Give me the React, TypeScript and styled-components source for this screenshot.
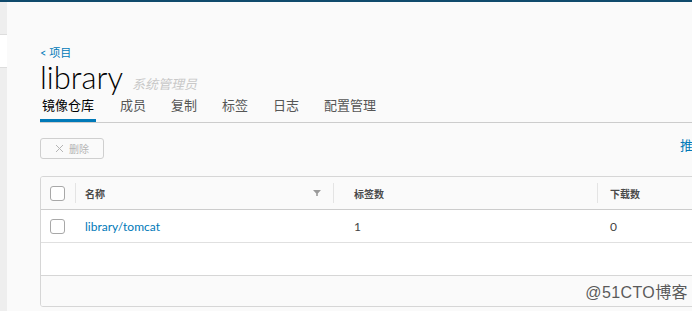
import React from 'react'
import styled, { createGlobalStyle } from 'styled-components'

const GlobalStyle = createGlobalStyle`
  html, body {
    margin: 0;
    padding: 0;
    background: #fafafa;
    overflow: hidden;
  }
  body {
    font-family: Lato, "Noto Sans CJK SC", sans-serif;
    color: #313131;
  }
`

const CJK = `Lato, "Noto Sans CJK SC", sans-serif`

const TopBar = styled.div`
  height: 2px;
  background: #0f4a6c;
`

const Shell = styled.div`
  display: flex;
  height: 309px;
`

const Sidebar = styled.div`
  width: 7px;
  flex: none;
  background: #eeeeee;
  padding-top: 32px;
`

const SideActive = styled.div`
  height: 32px;
  background: #ffffff;
  border-top: 1px solid #dddddd;
  border-bottom: 1px solid #dddddd;
`

const Main = styled.main`
  flex: 1;
  min-width: 0;
  padding: 44px 0 0 33px;
  overflow: hidden;
`

const Breadcrumb = styled.a`
  display: block;
  font-family: ${CJK};
  font-size: 11px;
  line-height: 14px;
  color: #0079b8;
  text-decoration: none;
`

const TitleRow = styled.div`
  display: flex;
  align-items: baseline;
  gap: 9px;
  height: 34px;
`

const Title = styled.h1`
  margin: 0;
  font-family: Lato, sans-serif;
  font-weight: 300;
  font-size: 31px;
  line-height: 34px;
  color: #000000;
`

const Role = styled.span`
  font-family: ${CJK};
  font-style: italic;
  font-size: 13px;
  color: #c8c8c8;
`

const TabBar = styled.nav`
  display: flex;
  gap: 23px;
  border-bottom: 1px solid #cccccc;
`

const Tab = styled.div<{ $active?: boolean }>`
  font-family: ${CJK};
  font-size: 13px;
  line-height: 18px;
  padding: 2px ${({ $active }) => ($active ? '2px' : '1px')} 8px;
  color: ${({ $active }) => ($active ? '#000000' : '#565656')};
  box-shadow: ${({ $active }) => ($active ? 'inset 0 -3px 0 #0079b8' : 'none')};
`

const Toolbar = styled.div`
  display: flex;
  align-items: flex-start;
  justify-content: space-between;
  margin-top: 15px;
  height: 22px;
`

const GhostButton = styled.button`
  display: flex;
  align-items: center;
  gap: 5px;
  height: 21px;
  width: 64px;
  padding: 0 0 0 14px;
  border: 1px solid #cfcfcf;
  border-radius: 3px;
  background: transparent;
  font-family: ${CJK};
  font-size: 10px;
  color: #b5b5b5;
`

const PushLink = styled.span`
  font-family: ${CJK};
  font-size: 13px;
  line-height: 14px;
  white-space: nowrap;
  color: #0079b8;
  margin-right: -40px;
`

const Table = styled.div`
  margin-top: 16px;
  width: 700px;
  border: 1px solid #d6d6d6;
  border-radius: 3px;
  background: #ffffff;
  overflow: hidden;
`

const columns = '34px 258px 264px 1fr'

const HeaderRow = styled.div`
  display: grid;
  grid-template-columns: ${columns};
  height: 32px;
  align-items: center;
  background: #fafafa;
  border-bottom: 1px solid #cccccc;
`

const Row = styled.div`
  display: grid;
  grid-template-columns: ${columns};
  height: 32px;
  align-items: center;
  border-bottom: 1px solid #e0e0e0;
`

const HeadCell = styled.div<{ $pad: number }>`
  display: flex;
  align-items: center;
  justify-content: space-between;
  height: 20px;
  padding: 0 12px 0 ${({ $pad }) => $pad}px;
  border-left: 1px solid #e4e4e4;
  font-family: ${CJK};
  font-size: 10px;
  font-weight: 600;
  color: #4a4a4a;
`

const CheckCell = styled.div`
  display: flex;
  align-items: center;
  padding-left: 9px;
`

const Box = styled.span`
  display: block;
  width: 13px;
  height: 13px;
  border: 1px solid #a8a8a8;
  border-radius: 3px;
  background: #ffffff;
`

const Cell = styled.div<{ $pad: number }>`
  padding-left: ${({ $pad }) => $pad + 1}px;
  font-family: ${CJK};
  font-size: 12px;
  color: #444444;
`

const RepoLink = styled.a`
  color: #0079b8;
  text-decoration: none;
`

const EmptyArea = styled.div`
  height: 32px;
  border-bottom: 1px solid #d6d6d6;
`

const Footer = styled.div`
  height: 30px;
  background: #fafafa;
`

const Watermark = styled.div`
  position: absolute;
  right: 4px;
  bottom: 8px;
  font-family: "Liberation Sans", "Noto Sans CJK SC", sans-serif;
  font-size: 16px;
  letter-spacing: 0.4px;
  color: #5a5a5a;
`

function FilterIcon() {
  return (
    <svg width="8" height="6" viewBox="0 0 8 6">
      <path d="M0 0h8L4.8 3.4V6H3.2V3.4z" fill="#9a9a9a" />
    </svg>
  )
}

function CloseIcon() {
  return (
    <svg width="9" height="9" viewBox="0 0 9 9">
      <path d="M1 1l7 7M8 1L1 8" stroke="#b5b5b5" strokeWidth="1" fill="none" />
    </svg>
  )
}

const tabs = ['镜像仓库', '成员', '复制', '标签', '日志', '配置管理']

export default function App() {
  return (
    <>
      <GlobalStyle />
      <TopBar />
      <Shell>
        <Sidebar>
          <SideActive />
        </Sidebar>
        <Main>
          <Breadcrumb>&lt; 项目</Breadcrumb>
          <TitleRow>
            <Title>library</Title>
            <Role>系统管理员</Role>
          </TitleRow>
          <TabBar>
            {tabs.map((t, i) => (
              <Tab key={t} $active={i === 0}>
                {t}
              </Tab>
            ))}
          </TabBar>
          <Toolbar>
            <GhostButton>
              <CloseIcon />
              删除
            </GhostButton>
            <PushLink>推送镜像</PushLink>
          </Toolbar>
          <Table>
            <HeaderRow>
              <CheckCell>
                <Box />
              </CheckCell>
              <HeadCell $pad={9}>
                名称
                <FilterIcon />
              </HeadCell>
              <HeadCell $pad={20}>标签数</HeadCell>
              <HeadCell $pad={12}>下载数</HeadCell>
            </HeaderRow>
            <Row>
              <CheckCell>
                <Box />
              </CheckCell>
              <Cell $pad={9}>
                <RepoLink>library/tomcat</RepoLink>
              </Cell>
              <Cell $pad={20}>1</Cell>
              <Cell $pad={12}>0</Cell>
            </Row>
            <EmptyArea />
            <Footer />
          </Table>
        </Main>
      </Shell>
      <Watermark>@51CTO博客</Watermark>
    </>
  )
}
